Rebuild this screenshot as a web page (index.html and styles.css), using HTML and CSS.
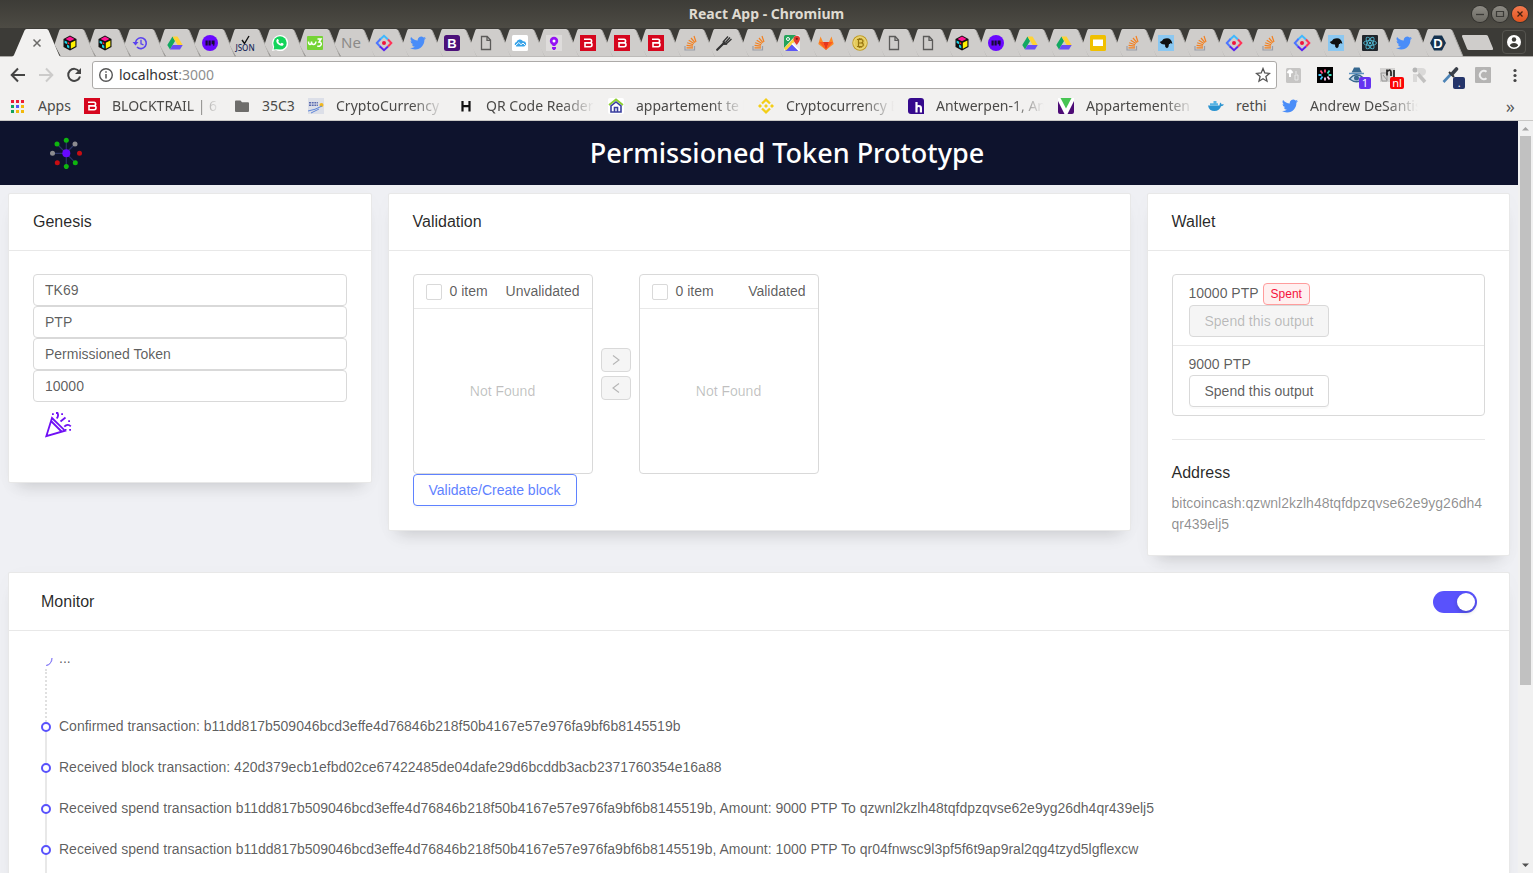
FILE: index.html
```html
<!DOCTYPE html>
<html lang="en">
<head>
<meta charset="utf-8">
<title>React App - Chromium</title>
<link rel="stylesheet" href="styles.css">
</head>
<body>
<svg class="sprite" aria-hidden="true">
  <symbol id="tab-shape" viewBox="0 0 50 29" overflow="visible">
    <path d="M15.500 1 H37 Q38.500 1 39.200 2.500 L50 28.500 H15.800 L9.500 16.500 L14.200 2.500 Q14.700 1 15.500 1Z" fill="#cfcdcb"/>
    <path d="M39.200 2.500 L50 28.500" stroke="#a9a7a4" fill="none"/>
  </symbol>
  <symbol id="i-cube" viewBox="0 0 16 16"><path d="M8 .5 14.500 4v8L8 15.500 1.500 12V4Z" fill="#111"/><path d="M8 1.500 12.500 4 8 6.300 3.500 4Z" fill="#ff1493"/><path d="M8.800 7.800 13.400 5.500v5.800L8.800 13.700Z" fill="#fff200"/><path d="M2.600 5.500 5.200 6.800v2.400L2.600 8Z" fill="#19d3e8"/><path d="M5 9.500 7.300 10.700v2.800L5 12.300Z" fill="#19d3e8"/><path d="M5.700 7l1.600.8v1.700l-1.600-.8Z" fill="#f22"/></symbol>
  <symbol id="i-clock" viewBox="0 0 16 16"><path d="M3.600 7A5.400 5.400 0 1 1 5 12" fill="none" stroke="#5a43ee" stroke-width="1.600"/><path d="M.5 7h6L3.500 10.500Z" fill="#5a43ee"/><path d="M9 4.800v4l2.500 1" fill="none" stroke="#5a43ee" stroke-width="1.300"/></symbol>
  <symbol id="i-drive" viewBox="0 0 16 16"><path d="M5.500 1.500 8 6 3 14.500.3 10Z" fill="#11a861"/><path d="M5.500 1.500h5L15.700 10h-5Z" fill="#ffd335"/><path d="M5.600 10h10.100L13 14.500H3Z" fill="#6a4df5"/></symbol>
  <symbol id="i-purple" viewBox="0 0 16 16"><circle cx="8" cy="8" r="8" fill="#6a08ff"/><path d="M3.500 5.500h2.200v5H3.500zM6.500 5.500h2.200v5H6.500zM9.600 5.500h3v3.700h-3z" fill="#160b35"/><circle cx="11.700" cy="9.900" r=".8" fill="#160b35"/></symbol>
  <symbol id="i-whatsapp" viewBox="0 0 16 16"><path d="M0 16 1.200 12A8 8 0 1 1 4 14.900Z" fill="#fff"/><circle cx="8" cy="7.900" r="6.700" fill="#13d45a"/><path d="M1.600 14.500 2.600 10l4 4Z" fill="#13d45a"/><path d="M5 4.300c.8-.6 1.300-.3 1.900 1.400-.7 1-.6 1.100.2 2 .8.900 1.300 1.200 1.700.9l1-.9c1.700.8 2 1 1.800 1.600-.5 1.800-2.400 1.900-4.400.7C4.700 8.500 3.500 6.200 5 4.300Z" fill="#fff"/></symbol>
  <symbol id="i-w3" viewBox="0 0 16 16"><rect y="1" width="16" height="14" rx="1" fill="#75d435"/><path d="M1.500 6.500c0 4 3 4 3 0 0 4 4 4 4.500 0M10.500 4h3.500l-2 3c4 0 2.500 5.500-1.700 4" fill="none" stroke="#fff" stroke-width="1.500"/></symbol>
  <symbol id="i-diamond" viewBox="0 0 16 16" overflow="visible"><path d="M4 4.500 8 .8l4 3.700" fill="none" stroke="#3fb8ff" stroke-width="2"/><path d="M4.500 4 .8 8l3.700 4" fill="none" stroke="#4d76ff" stroke-width="2"/><path d="M4 11.500 8 15.200l4-3.700" fill="none" stroke="#5b22f0" stroke-width="2"/><path d="M12 4.500 15.300 8 12 11.500" fill="none" stroke="#ff3158" stroke-width="2"/><circle cx="8" cy="8" r="2" fill="#f0143c"/></symbol>
  <symbol id="i-twitter" viewBox="0 0 24 24"><path fill="#4a8df8" d="M23.950 4.570a10 10 0 0 1-2.820.770 4.960 4.960 0 0 0 2.160-2.720 9.900 9.900 0 0 1-3.120 1.190 4.920 4.920 0 0 0-8.380 4.480A13.930 13.930 0 0 1 1.640 3.160a4.920 4.920 0 0 0 1.520 6.570 4.900 4.900 0 0 1-2.230-.61v.06a4.920 4.920 0 0 0 3.950 4.830 5 5 0 0 1-2.210.080 4.940 4.940 0 0 0 4.600 3.420A9.870 9.870 0 0 1 0 19.540a13.940 13.940 0 0 0 7.550 2.210c9.050 0 14-7.500 14-13.980 0-.210 0-.42-.020-.63a9.940 9.940 0 0 0 2.420-2.570Z"/></symbol>
  <symbol id="i-doc" viewBox="0 0 16 16"><path d="M3.500 1.500h5.700L12.500 5v9.500h-9ZM9 1.500V5.300h3.500" fill="none" stroke="#5c5b5a" stroke-width="1.300"/></symbol>
  <symbol id="i-cloud" viewBox="0 0 16 16"><rect width="16" height="16" rx="1.500" fill="#fff"/><path d="M4.500 11.500A2.300 2.300 0 0 1 4.500 7 3.600 3.600 0 0 1 11 6.200a2.700 2.700 0 0 1 1 5.300Z" fill="#38a3e8"/><path d="M3 11 6.800 7.500 9 9.700l2-1.700 2.500 2.500" fill="none" stroke="#fff"/></symbol>
  <symbol id="i-bulb" viewBox="0 0 16 16"><rect width="16" height="16" fill="#dedcdb"/><circle cx="8" cy="6" r="4.200" fill="#9412f5"/><circle cx="8" cy="6" r="1.500" fill="#fff"/><path d="M6 12h4v1.500L8.800 15H7.200L6 13.500ZM6.500 9.500h3v1.500h-3z" fill="#9412f5"/></symbol>
  <symbol id="i-red" viewBox="0 0 16 16"><rect width="16" height="16" fill="#d6061e"/><path d="M4 4.300h6q1.600 0 1.600 1.800T10 7.900H5v3.800h5.200q1.800 0 1.800-1.900T10 7.900" fill="none" stroke="#fff" stroke-width="1.600"/></symbol>
  <symbol id="i-stack" viewBox="0 0 16 16"><path d="M3 11v4h9.500v-4" fill="none" stroke="#9a9da8" stroke-width="1.200"/><path d="M4.500 12.800h6.500M4.600 10.300l6.400.8M5.200 7.800l6 1.900M6.700 5.200l5.300 3.200M9 3l4 4.700M12 1l2 6" stroke="#f4801f" stroke-width="1.200"/></symbol>
  <symbol id="i-fork" viewBox="0 0 16 16"><path d="M1.200 14.800 8.500 7.500" stroke="#333" stroke-width="2.200" stroke-linecap="round"/><path d="M7 7 12 1.500M9.500 7.500l4.500-5M9.500 9.500l6-5.500" stroke="#333" stroke-width="1.300" fill="none"/><path d="M7 6l4.500 3.500L8 10 6.500 9Z" fill="#333"/></symbol>
  <symbol id="i-maps" viewBox="0 0 16 16"><rect width="16" height="16" rx="1.500" fill="#e8e8e8"/><path d="M0 1.500Q0 0 1.500 0H12L0 13Z" fill="#24a45a"/><path d="M1 16 8 9l7 7Z" fill="#5c56f6"/><path d="M0 13.500 11 2l2 2L2 15.500Z" fill="#fbd33c"/><path d="M8 8.500 15.500 16" stroke="#fff" stroke-width="1.500"/><path d="M12.800 10Q9 5.500 9.500 3.500a3.300 3.300 0 0 1 6.500 0Q16 6 12.800 10Z" fill="#e23b30"/><circle cx="12.800" cy="3.800" r="1.100" fill="#7d1713"/><circle cx="4" cy="4" r="1.500" fill="none" stroke="#fff"/></symbol>
  <symbol id="i-gitlab" viewBox="0 0 16 16"><path d="M8 15 .3 9 2.500 1.500 5 7h6l2.500-5.500L15.700 9Z" fill="#fc8a26"/><path d="M8 15 5 7h6Z" fill="#e5361f"/><path d="M8 15 1 7h4ZM8 15l7-8h-4Z" fill="#fc5b22"/></symbol>
  <symbol id="i-btc" viewBox="0 0 16 16"><circle cx="8" cy="8" r="7.700" fill="#c19b1c"/><circle cx="8" cy="8" r="6.300" fill="#e5cb5a" stroke="#f8edae" stroke-width=".7"/><path d="M5 4.500h4q2 0 2 1.700T9 8H6.500M9 8q2.300 0 2.300 1.800T9 11.500H5M6.500 4.500v7M7.300 3v1.500M9 3v1.500M7.300 11.500V13M9 11.500V13" fill="none" stroke="#957310" stroke-width="1.200"/></symbol>
  <symbol id="i-slides" viewBox="0 0 16 16"><rect width="16" height="16" rx="1.500" fill="#f0c000"/><rect x="3" y="4.500" width="10" height="6.500" fill="#fff"/></symbol>
  <symbol id="i-horse" viewBox="0 0 16 16"><rect width="16" height="16" fill="#8ac7f1"/><path d="M1.700 7Q4 6.500 5.500 4 8 3 11 3.500 14 5 14.300 9L12.500 7.800Q12.500 9.500 11 9 11 12 9 13.200 6.500 12 7 9.500 3.500 9.800 1.700 7Z" fill="#101010"/></symbol>
  <symbol id="i-react" viewBox="0 0 16 16"><rect width="16" height="16" rx="1" fill="#20252b"/><g fill="none" stroke="#4fb3cc" stroke-width=".9"><ellipse cx="8" cy="8" rx="6.500" ry="2.500"/><ellipse cx="8" cy="8" rx="6.500" ry="2.500" transform="rotate(60 8 8)"/><ellipse cx="8" cy="8" rx="6.500" ry="2.500" transform="rotate(120 8 8)"/></g><circle cx="8" cy="8" r="1.200" fill="#4fb3cc"/></symbol>
</svg>

<header class="titlebar">
  <span class="titlebar-text">React App - Chromium</span>
  <div class="window-buttons">
    <button class="win" aria-label="Minimize"><svg viewBox="0 0 16 16"><path d="M4 8.500h8" stroke="#3b3a36" stroke-width="1.300"/></svg></button>
    <button class="win" aria-label="Maximize"><svg viewBox="0 0 16 16"><path d="M4.500 5.500h7v5h-7z" fill="none" stroke="#3b3a36" stroke-width="1.200"/></svg></button>
    <button class="win win-close" aria-label="Close"><svg viewBox="0 0 16 16"><path d="M5.500 5.500l5 5M10.500 5.500l-5 5" stroke="#46200f" stroke-width="1.300"/></svg></button>
  </div>
</header>

<nav class="tabstrip" aria-label="Tabs">
  <div class="tab tab-active"><button class="tab-hit" aria-label="Close tab"><svg viewBox="0 0 50 29"><path d="M0 29 Q1.500 28 2 27 L12.500 2.500 Q13 1 14.500 1 H34.500 Q36 1 36.600 2.500 L47 27 Q47.500 28.500 49 29Z" fill="#f2f1f0"/><path d="M21.500 11.500l7 7M28.500 11.500l-7 7" stroke="#6b6a68" stroke-width="1.500"/></svg></button></div>
  <ul class="tabs">
    <li class="tab"><button class="tab-hit" aria-label="Cube"><svg viewBox="0 0 50 29"><use href="#tab-shape"/><use href="#i-cube" x="17" y="7" width="16" height="16"/></svg></button></li>
    <li class="tab"><button class="tab-hit" aria-label="Cube"><svg viewBox="0 0 50 29"><use href="#tab-shape"/><use href="#i-cube" x="17" y="7" width="16" height="16"/></svg></button></li>
    <li class="tab"><button class="tab-hit" aria-label="History"><svg viewBox="0 0 50 29"><use href="#tab-shape"/><use href="#i-clock" x="17" y="7" width="16" height="16"/></svg></button></li>
    <li class="tab"><button class="tab-hit" aria-label="Drive"><svg viewBox="0 0 50 29"><use href="#tab-shape"/><use href="#i-drive" x="17" y="7" width="16" height="16"/></svg></button></li>
    <li class="tab"><button class="tab-hit" aria-label="Chat"><svg viewBox="0 0 50 29"><use href="#tab-shape"/><use href="#i-purple" x="17" y="7" width="16" height="16"/></svg></button></li>
    <li class="tab"><button class="tab-hit" aria-label="JSON"><svg viewBox="0 0 50 29"><use href="#tab-shape"/><path d="M22 12l2.500 3.500L29 8" fill="none" stroke="#111" stroke-width="1.400"/><text x="25" y="23" text-anchor="middle" class="g-json">JSON</text></svg></button></li>
    <li class="tab"><button class="tab-hit" aria-label="WhatsApp"><svg viewBox="0 0 50 29"><use href="#tab-shape"/><use href="#i-whatsapp" x="17" y="7" width="16" height="16"/></svg></button></li>
    <li class="tab"><button class="tab-hit" aria-label="W3"><svg viewBox="0 0 50 29"><use href="#tab-shape"/><use href="#i-w3" x="17" y="7" width="16" height="16"/></svg></button></li>
    <li class="tab"><button class="tab-hit" aria-label="New"><svg viewBox="0 0 50 29"><use href="#tab-shape"/><text x="16" y="20" class="g-ne">Ne</text></svg></button></li>
    <li class="tab"><button class="tab-hit" aria-label="Diamond"><svg viewBox="0 0 50 29"><use href="#tab-shape"/><use href="#i-diamond" x="17" y="7" width="16" height="16"/></svg></button></li>
    <li class="tab"><button class="tab-hit" aria-label="Twitter"><svg viewBox="0 0 50 29"><use href="#tab-shape"/><use href="#i-twitter" x="17" y="7" width="16" height="16"/></svg></button></li>
    <li class="tab"><button class="tab-hit" aria-label="Bootstrap"><svg viewBox="0 0 50 29"><use href="#tab-shape"/><rect x="17" y="7" width="16" height="16" rx="2.500" fill="#4b1079"/><text x="25" y="20" text-anchor="middle" class="g-boot">B</text></svg></button></li>
    <li class="tab"><button class="tab-hit" aria-label="Page"><svg viewBox="0 0 50 29"><use href="#tab-shape"/><use href="#i-doc" x="17" y="7" width="16" height="16"/></svg></button></li>
    <li class="tab"><button class="tab-hit" aria-label="Cloud"><svg viewBox="0 0 50 29"><use href="#tab-shape"/><use href="#i-cloud" x="17" y="7" width="16" height="16"/></svg></button></li>
    <li class="tab"><button class="tab-hit" aria-label="Bulb"><svg viewBox="0 0 50 29"><use href="#tab-shape"/><use href="#i-bulb" x="17" y="7" width="16" height="16"/></svg></button></li>
    <li class="tab"><button class="tab-hit" aria-label="Blocktrail"><svg viewBox="0 0 50 29"><use href="#tab-shape"/><use href="#i-red" x="17" y="7" width="16" height="16"/></svg></button></li>
    <li class="tab"><button class="tab-hit" aria-label="Blocktrail"><svg viewBox="0 0 50 29"><use href="#tab-shape"/><use href="#i-red" x="17" y="7" width="16" height="16"/></svg></button></li>
    <li class="tab"><button class="tab-hit" aria-label="Blocktrail"><svg viewBox="0 0 50 29"><use href="#tab-shape"/><use href="#i-red" x="17" y="7" width="16" height="16"/></svg></button></li>
    <li class="tab"><button class="tab-hit" aria-label="Stack Overflow"><svg viewBox="0 0 50 29"><use href="#tab-shape"/><use href="#i-stack" x="17" y="7" width="16" height="16"/></svg></button></li>
    <li class="tab"><button class="tab-hit" aria-label="Fork"><svg viewBox="0 0 50 29"><use href="#tab-shape"/><use href="#i-fork" x="17" y="7" width="16" height="16"/></svg></button></li>
    <li class="tab"><button class="tab-hit" aria-label="Stack Overflow"><svg viewBox="0 0 50 29"><use href="#tab-shape"/><use href="#i-stack" x="17" y="7" width="16" height="16"/></svg></button></li>
    <li class="tab"><button class="tab-hit" aria-label="Maps"><svg viewBox="0 0 50 29"><use href="#tab-shape"/><use href="#i-maps" x="17" y="7" width="16" height="16"/></svg></button></li>
    <li class="tab"><button class="tab-hit" aria-label="GitLab"><svg viewBox="0 0 50 29"><use href="#tab-shape"/><use href="#i-gitlab" x="17" y="7" width="16" height="16"/></svg></button></li>
    <li class="tab"><button class="tab-hit" aria-label="Bitcoin"><svg viewBox="0 0 50 29"><use href="#tab-shape"/><use href="#i-btc" x="17" y="7" width="16" height="16"/></svg></button></li>
    <li class="tab"><button class="tab-hit" aria-label="Page"><svg viewBox="0 0 50 29"><use href="#tab-shape"/><use href="#i-doc" x="17" y="7" width="16" height="16"/></svg></button></li>
    <li class="tab"><button class="tab-hit" aria-label="Page"><svg viewBox="0 0 50 29"><use href="#tab-shape"/><use href="#i-doc" x="17" y="7" width="16" height="16"/></svg></button></li>
    <li class="tab"><button class="tab-hit" aria-label="Cube"><svg viewBox="0 0 50 29"><use href="#tab-shape"/><use href="#i-cube" x="17" y="7" width="16" height="16"/></svg></button></li>
    <li class="tab"><button class="tab-hit" aria-label="Chat"><svg viewBox="0 0 50 29"><use href="#tab-shape"/><use href="#i-purple" x="17" y="7" width="16" height="16"/></svg></button></li>
    <li class="tab"><button class="tab-hit" aria-label="Drive"><svg viewBox="0 0 50 29"><use href="#tab-shape"/><use href="#i-drive" x="17" y="7" width="16" height="16"/></svg></button></li>
    <li class="tab"><button class="tab-hit" aria-label="Drive"><svg viewBox="0 0 50 29"><use href="#tab-shape"/><use href="#i-drive" x="17" y="7" width="16" height="16"/></svg></button></li>
    <li class="tab"><button class="tab-hit" aria-label="Slides"><svg viewBox="0 0 50 29"><use href="#tab-shape"/><use href="#i-slides" x="17" y="7" width="16" height="16"/></svg></button></li>
    <li class="tab"><button class="tab-hit" aria-label="Stack Overflow"><svg viewBox="0 0 50 29"><use href="#tab-shape"/><use href="#i-stack" x="17" y="7" width="16" height="16"/></svg></button></li>
    <li class="tab"><button class="tab-hit" aria-label="Horse"><svg viewBox="0 0 50 29"><use href="#tab-shape"/><use href="#i-horse" x="17" y="7" width="16" height="16"/></svg></button></li>
    <li class="tab"><button class="tab-hit" aria-label="Stack Overflow"><svg viewBox="0 0 50 29"><use href="#tab-shape"/><use href="#i-stack" x="17" y="7" width="16" height="16"/></svg></button></li>
    <li class="tab"><button class="tab-hit" aria-label="Diamond"><svg viewBox="0 0 50 29"><use href="#tab-shape"/><use href="#i-diamond" x="17" y="7" width="16" height="16"/></svg></button></li>
    <li class="tab"><button class="tab-hit" aria-label="Stack Overflow"><svg viewBox="0 0 50 29"><use href="#tab-shape"/><use href="#i-stack" x="17" y="7" width="16" height="16"/></svg></button></li>
    <li class="tab"><button class="tab-hit" aria-label="Diamond"><svg viewBox="0 0 50 29"><use href="#tab-shape"/><use href="#i-diamond" x="17" y="7" width="16" height="16"/></svg></button></li>
    <li class="tab"><button class="tab-hit" aria-label="Horse"><svg viewBox="0 0 50 29"><use href="#tab-shape"/><use href="#i-horse" x="17" y="7" width="16" height="16"/></svg></button></li>
    <li class="tab"><button class="tab-hit" aria-label="React"><svg viewBox="0 0 50 29"><use href="#tab-shape"/><use href="#i-react" x="17" y="7" width="16" height="16"/></svg></button></li>
    <li class="tab"><button class="tab-hit" aria-label="Twitter"><svg viewBox="0 0 50 29"><use href="#tab-shape"/><use href="#i-twitter" x="17" y="7" width="16" height="16"/></svg></button></li>
    <li class="tab"><button class="tab-hit" aria-label="D"><svg viewBox="0 0 50 29"><use href="#tab-shape"/><path d="M21 7.500h8L33 15l-4 7.500h-8L17 15Z" fill="#14324f"/><text x="25" y="20" text-anchor="middle" class="g-boot">D</text></svg></button></li>
  </ul>
  <div class="tab-tools">
    <button class="new-tab" aria-label="New tab"><svg width="34" height="17" viewBox="0 0 34 17"><path d="M2 1h23q1.500 0 2 1.200l5 12q.6 1.800-.8 1.800H8q-1.500 0-2-1.200L1 2.500Q.5 1 2 1Z" fill="#cfcdcb"/></svg></button>
    <button class="avatar" aria-label="Profile"><svg width="16" height="16" viewBox="0 0 16 16"><circle cx="8" cy="8" r="7" fill="#fff"/><circle cx="8" cy="5.500" r="2.200" fill="#3c3b37"/><path d="M3.800 11.500Q4.500 9 8 9t4.200 2.500Q10.500 13.500 8 13.500t-4.200-2Z" fill="#3c3b37"/></svg></button>
  </div>
</nav>

<div class="toolbar">
  <div class="nav-buttons">
    <button class="tool" aria-label="Back"><svg viewBox="0 0 16 16"><path d="M15 8H2M8 1.500 1.700 8 8 14.500" fill="none" stroke="#444" stroke-width="2"/></svg></button>
    <button class="tool" aria-label="Forward" disabled><svg viewBox="0 0 16 16"><path d="M1 8h13M8 1.500 14.300 8 8 14.500" fill="none" stroke="#cccbca" stroke-width="2"/></svg></button>
    <button class="tool" aria-label="Reload"><svg viewBox="0 0 16 16"><path d="M13.200 4.500A6 6 0 1 0 14 9.500" fill="none" stroke="#444" stroke-width="2"/><path d="M15 1v6H9Z" fill="#444"/></svg></button>
  </div>
  <div class="omnibox">
    <svg class="ico" viewBox="0 0 16 16"><circle cx="8" cy="8" r="6.300" fill="none" stroke="#555" stroke-width="1.400"/><path d="M8 7v4.500M8 4.300v1.500" stroke="#555" stroke-width="1.500"/></svg>
    <div class="url" role="textbox" aria-label="Address" tabindex="0">localhost<span class="port">:3000</span></div>
    <button class="tool star" aria-label="Bookmark"><svg viewBox="0 0 16 16"><path d="M8 1.500 9.800 6l4.700.4-3.600 3.100 1.100 4.700L8 11.700l-4 2.500 1.100-4.700L1.500 6.400 6.200 6Z" fill="none" stroke="#555" stroke-width="1.300"/></svg></button>
  </div>
  <div class="extensions">
    <button class="ext" aria-label="Translate"><svg viewBox="0 0 20 20"><rect x="1" y="1" width="15" height="15" rx="1.500" fill="#c6c5c4"/><path d="M5 3v7M5 3 2.500 6M5 3l2.500 3" stroke="#fff" stroke-width="2"/><path d="M11 4v3M10 8h3v5h-3z" stroke="#e8e8e8" fill="none"/></svg></button>
    <button class="ext" aria-label="Burst"><svg viewBox="0 0 20 20"><rect x="1" y="0" width="16" height="16" fill="#000"/><g stroke-width="1.800"><path d="M9 2.500v3M4.500 3.500l2 3" stroke="#ff4c7c"/><path d="M13.500 3.500l-2 3M12.500 8h3" stroke="#3fe0c0"/><path d="M2.500 8h3M4.500 12.500l2-3" stroke="#45c8ff"/><path d="M9 10.500v3M13.500 12.500l-2-3" stroke="#ffc6ee"/></g></svg></button>
    <button class="ext" aria-label="Privacy"><svg viewBox="0 0 20 20"><path d="M3.500 5.500Q5 3 6 .5h5.500Q12.500 3.500 14 5.500Z" fill="#36688f"/><path d="M1 6.500h15" stroke="#5d93c0" stroke-width="1.500"/><path d="M1.500 12Q8 4 15.500 11q-6 7-14 1Z" fill="#c9dcec" stroke="#36688f" stroke-width="1.300"/><circle cx="8.500" cy="11" r="2.500" fill="#36688f"/></svg><span class="badge badge-violet">1</span></button>
    <button class="ext" aria-label="Language"><svg viewBox="0 0 20 20"><rect x="1" y="1" width="15" height="14" fill="#d5d4d3"/><path d="M2 6h6v8H3ZM4 8l4 5" fill="none" stroke="#999"/><path d="M8 2.500v6M8 4.500q3.500-3 4 .5v4M15 3v7" fill="none" stroke="#222" stroke-width="1.700"/></svg><span class="badge badge-red">nl</span></button>
    <button class="ext" aria-label="Reader"><svg viewBox="0 0 20 20"><circle cx="4" cy="3" r="2.500" fill="#b5b5b5"/><path d="M2 7h4v8H2zM6 1h5q4 0 4 3.500T11 9L7 6Z" fill="#dad9d8"/><path d="M7 7l7 8" stroke="#c2c1c0" stroke-width="3.500"/></svg></button>
    <button class="ext" aria-label="Color picker"><svg viewBox="0 0 20 20"><path d="M1.500 15 9 7" stroke="#4d84b6" stroke-width="2.600"/><path d="M7 5l5 5" stroke="#333" stroke-width="2"/><path d="M10 7l4.500-5" stroke="#3a3f48" stroke-width="3.600" stroke-linecap="round"/></svg><span class="badge badge-navy">.</span></button>
    <button class="ext" aria-label="C extension"><svg viewBox="0 0 20 20"><rect x="1" y="0" width="16" height="16" rx="1" fill="#b5b4b3"/><path d="M12.500 4.700A4 4.300 0 1 0 12.500 11.300" fill="none" stroke="#eee" stroke-width="2"/></svg></button>
    <button class="ext" aria-label="Menu"><svg viewBox="0 0 20 20"><circle cx="10" cy="3.500" r="1.600" fill="#444"/><circle cx="10" cy="8.500" r="1.600" fill="#444"/><circle cx="10" cy="13.500" r="1.600" fill="#444"/></svg></button>
  </div>
</div>

<nav class="bookmarks" aria-label="Bookmarks">
  <a class="bm" href="#"><svg class="ico" viewBox="0 0 16 16"><path d="M1 2h3v3H1zM6 2h3v3H6zM11 2h3v3h-3z" fill="#ee1c35"/><path d="M1 7h3v3H1z" fill="#12a45c"/><path d="M6 7h3v3H6z" fill="#4f57f5"/><path d="M11 7h3v3h-3z" fill="#f2b90c"/><path d="M1 12h3v3H1z" fill="#12a45c"/><path d="M6 12h3v3H6zM11 12h3v3h-3z" fill="#f2b90c"/></svg><span class="bm-text">Apps</span></a>
  <a class="bm" href="#"><svg class="ico"><use href="#i-red"/></svg><span class="bm-text fade">BLOCKTRAIL | 61.2</span></a>
  <a class="bm" href="#"><svg class="ico" viewBox="0 0 16 16"><path d="M1 3.500Q1 2.500 2 2.500h4.500L8 4.200h6q1 0 1 1V13q0 1-1 1H2q-1 0-1-1Z" fill="#6e6d6b"/></svg><span class="bm-text">35C3</span></a>
  <a class="bm" href="#"><svg class="ico" viewBox="0 0 16 16"><rect width="16" height="16" fill="#dcdfe8"/><path d="M1 4.500h9M1 6h9M1 7.500h9" stroke="#5b6bb0" stroke-dasharray="2 .7"/><circle cx="13.500" cy="7" r="2" fill="#f2b81c"/><path d="M0 13q7-1 14-5M3 15l8-4" stroke="#5f86d8" fill="none"/></svg><span class="bm-text fade">CryptoCurrency M</span></a>
  <a class="bm" href="#"><svg class="ico" viewBox="0 0 16 16"><path d="M4.500 3v10.500M11.500 3v10.500M4.500 8.200h7" stroke="#111" stroke-width="2.200"/></svg><span class="bm-text fade">QR Code Reader |</span></a>
  <a class="bm" href="#"><svg class="ico" viewBox="0 0 16 16"><rect width="16" height="16" rx="2" fill="#fff"/><path d="M1 7 8 1.500 15 7" fill="none" stroke="#8ccf2f" stroke-width="1.800"/><path d="M3 14V8l5-4 5 4v6ZM6.500 14V9.500h3V14" fill="none" stroke="#3a3f9f" stroke-width="1.600"/></svg><span class="bm-text fade">appartement te hu</span></a>
  <a class="bm" href="#"><svg class="ico" viewBox="0 0 16 16"><path d="M4 5.500 8 1.700l4 3.800M4 10.500l4 3.800 4-3.800" fill="none" stroke="#f3ce16" stroke-width="2.300"/><path d="M8 6l2 2-2 2-2-2ZM2 6l2 2-2 2-2-2ZM14 6l2 2-2 2-2-2Z" fill="#f3ce16"/></svg><span class="bm-text fade">Cryptocurrency Ex</span></a>
  <a class="bm" href="#"><svg class="ico" viewBox="0 0 16 16"><path d="M3 0h10q3 0 3 3v13H3q-3 0-3-3V3q0-3 3-3Z" fill="#360a8d"/><path d="M8.500 4v10.500M8.500 10q0-2 2.200-2t2.200 2v4.500" fill="none" stroke="#fff" stroke-width="2.200"/></svg><span class="bm-text fade">Antwerpen-1, Ant</span></a>
  <a class="bm" href="#"><svg class="ico" viewBox="0 0 16 16"><path d="M0 2v12q0 2 2 2h12q2 0 2-2V2Z" fill="#4d0b76"/><path d="M0 0h16v3L9.500 16h-3L0 3Z" fill="#fff"/><path d="M2.500 0h11L8 10.500Z" fill="#47c553"/></svg><span class="bm-text fade">Appartementen t</span></a>
  <a class="bm" href="#"><svg class="ico" viewBox="0 0 16 16"><path d="M0 7.500h11.500q0-2 1-3 1 1 1 2 1-.5 2.500 0-1 1.800-3 1.800Q11.500 13 6.500 13 1 13 0 7.500Z" fill="#2a93d0"/><path d="M2 5.300h8v2.200H2zM5.500 3h3v2.300h-3z" fill="#58b4e4"/></svg><span class="bm-text">rethi</span></a>
  <a class="bm" href="#"><svg class="ico"><use href="#i-twitter"/></svg><span class="bm-text fade">Andrew DeSantis</span></a>
  <button class="bm-more" aria-label="More bookmarks">»</button>
</nav>

<div class="viewport">
  <main class="app">
    <header class="app-header">
      <svg class="logo" viewBox="0 0 32 32"><path d="M16.300 3v26.700M7 7l18.300 18.700M25 7l-9 9M2.300 16.300h14" stroke="#2b3566" stroke-width="1.200"/><g fill="#0eb50e"><circle cx="16.300" cy="3.200" r="2.500"/><circle cx="7" cy="7" r="2.500"/><circle cx="25.300" cy="25.700" r="2.500"/><circle cx="16.300" cy="29.600" r="2.500"/></g><g fill="#8c8c90"><circle cx="25" cy="7" r="2.500"/><circle cx="2.500" cy="16.300" r="2.500"/></g><g fill="#c60d12"><circle cx="29.500" cy="16.300" r="2.500"/><circle cx="7.300" cy="25.700" r="2.500"/></g><circle cx="16.300" cy="16.300" r="4" fill="#6808ff"/></svg>
      <h1 class="app-title">Permissioned Token Prototype</h1>
    </header>

    <div class="row">
      <section class="card">
        <h2 class="card-head">Genesis</h2>
        <div class="card-body">
          <input class="field" aria-label="Token id" value="TK69">
          <input class="field" aria-label="Symbol" value="PTP">
          <input class="field" aria-label="Name" value="Permissioned Token">
          <input class="field" aria-label="Supply" value="10000">
          <button class="party" aria-label="Create genesis"><svg width="27" height="26" viewBox="0 0 27 26"><g fill="none" stroke="#7010f5" stroke-width="1.800"><path d="M1.300 24.200 7 6l13 12.700ZM6.500 9.500 16.500 19.500M11 1h1.500q1.500 3-.8 5.500M15.500 9.500l5-4M19.300 14.700q3.500-3.500 6.500-.4"/></g><path d="M7 1.200h1.800V3H7zM16.200 1.200H18V3h-1.800zM23.200 8.200H25V10h-1.800zM24.200 17H26v1.800h-1.800zM20 17h1.500v1.500H20z" fill="#7010f5"/></svg></button>
        </div>
      </section>

      <section class="card">
        <h2 class="card-head">Validation</h2>
        <div class="card-body">
          <div class="transfer">
            <div class="box">
              <div class="box-head"><label class="check"><input type="checkbox"><span>0 item</span></label><span>Unvalidated</span></div>
              <div class="box-body">Not Found</div>
            </div>
            <div class="ops">
              <button class="op" aria-label="Move right" disabled><svg viewBox="0 0 12 12"><path d="M3 1.500 9 6l-6 4.500" fill="none" stroke="#b5b5b5" stroke-width="1.100"/></svg></button>
              <button class="op" aria-label="Move left" disabled><svg viewBox="0 0 12 12"><path d="M9 1.500 3 6l6 4.500" fill="none" stroke="#b5b5b5" stroke-width="1.100"/></svg></button>
            </div>
            <div class="box">
              <div class="box-head"><label class="check"><input type="checkbox"><span>0 item</span></label><span>Validated</span></div>
              <div class="box-body">Not Found</div>
            </div>
          </div>
          <button class="btn btn-ghost">Validate/Create block</button>
        </div>
      </section>

      <section class="card">
        <h2 class="card-head">Wallet</h2>
        <div class="card-body wallet-body">
          <ul class="outputs">
            <li class="output"><div class="amount">10000 PTP <span class="tag">Spent</span></div><button class="btn" disabled>Spend this output</button></li>
            <li class="output"><div class="amount">9000 PTP</div><button class="btn">Spend this output</button></li>
          </ul>
          <hr class="divider">
          <h3 class="sub-title">Address</h3>
          <p class="address">bitcoincash:qzwnl2kzlh48tqfdpzqvse62e9yg26dh4qr439elj5</p>
        </div>
      </section>
    </div>

    <section class="card monitor">
      <div class="card-head monitor-head">
        <h2 class="monitor-title">Monitor</h2>
        <input class="switch" type="checkbox" role="switch" aria-label="Monitor" checked>
      </div>
      <ol class="timeline">
        <li class="event pending"><span class="rail"><svg class="spin" viewBox="0 0 12 12"><path d="M11 2Q11.500 7.500 5 9.500 9.500 10 11 2Z" fill="#8a80f5" stroke="#8a80f5" stroke-width=".8"/></svg><span class="dots"></span></span><span>...</span></li>
        <li class="event first"><span class="rail line"><span class="dot"></span></span><span>Confirmed transaction: b11dd817b509046bcd3effe4d76846b218f50b4167e57e976fa9bf6b8145519b</span></li>
        <li class="event"><span class="rail line"><span class="dot"></span></span><span>Received block transaction: 420d379ecb1efbd02ce67422485de04dafe29d6bcddb3acb2371760354e16a88</span></li>
        <li class="event"><span class="rail line"><span class="dot"></span></span><span>Received spend transaction b11dd817b509046bcd3effe4d76846b218f50b4167e57e976fa9bf6b8145519b, Amount: 9000 PTP To qzwnl2kzlh48tqfdpzqvse62e9yg26dh4qr439elj5</span></li>
        <li class="event"><span class="rail line"><span class="dot"></span></span><span>Received spend transaction b11dd817b509046bcd3effe4d76846b218f50b4167e57e976fa9bf6b8145519b, Amount: 1000 PTP To qr04fnwsc9l3pf5f6t9ap9ral2qg4tzyd5lgflexcw</span></li>
      </ol>
    </section>
  </main>
  <div class="scrollbar" aria-hidden="true">
    <svg width="15" height="15" viewBox="0 0 15 15"><path d="M4 9.500h7L7.500 6Z" fill="#a3a3a3"/></svg>
    <div class="track"><div class="thumb"></div></div>
    <svg width="15" height="15" viewBox="0 0 15 15"><path d="M4 5.500h7L7.500 9Z" fill="#505050"/></svg>
  </div>
</div>
</body>
</html>
```
FILE: styles.css
```css
* { box-sizing: border-box; }
body {
  margin: 0;
  height: 100vh;
  display: flex;
  flex-direction: column;
  overflow: hidden;
  background: #f2f1f0;
  font: 14px/21px "Liberation Sans", Arial, sans-serif;
  color: rgba(0, 0, 0, .65);
}
button { font: inherit; color: inherit; margin: 0; padding: 0; border: 0; background: none; }
input { font: inherit; color: inherit; margin: 0; }
h1, h2, h3, p, ul, ol { margin: 0; padding: 0; list-style: none; font-weight: 400; }
svg { display: block; flex: none; }
.sprite { position: absolute; width: 0; height: 0; }
.ico { width: 16px; height: 16px; }
.g-json { font: 500 8px "Noto Sans", sans-serif; fill: #1b2a5c; }
.g-ne { font: 15px "Noto Sans", sans-serif; fill: #8b8a88; }
.g-boot { font: bold 13px "Liberation Sans", sans-serif; fill: #fff; }

/* Window frame */
.titlebar {
  flex: none;
  display: grid;
  grid-template-columns: 1fr auto 1fr;
  align-items: center;
  height: 28px;
  background: linear-gradient(#3d3c37, #4d4b44);
}
.titlebar-text { grid-column: 2; font: bold 14px/20px "Noto Sans", sans-serif; color: #dfdbd2; }
.window-buttons { display: flex; justify-content: flex-end; gap: 4px; padding-right: 5px; }
.win { width: 16px; height: 16px; border-radius: 50%; background: linear-gradient(#8d8b84, #6b6962); box-shadow: 0 0 0 1px #33322e; }
.win-close { background: linear-gradient(#f47a4f, #e2541f); }

.tabstrip { flex: none; display: flex; height: 29px; padding-left: 12px; background: #3c3b37; border-bottom: 1px solid #a9a7a4; }
.tabs { flex: 1; display: flex; min-width: 0; }
.tab { flex: 1 1 0; min-width: 0; display: flex; justify-content: center; }
.tabs .tab:nth-child(-n+9) { flex: 0 1 35px; }
.tab-hit { flex: none; width: 50px; height: 29px; }
.tab-hit svg { width: 50px; height: 29px; overflow: visible; }
.tab-active { flex: none; width: 40px; justify-content: flex-start; position: relative; z-index: 1; }
.tab-tools { flex: none; display: flex; align-items: center; gap: 7px; width: 78px; padding-left: 6px; }
.avatar { display: grid; place-items: center; width: 24px; height: 24px; border: 1px solid #55544f; border-radius: 4px; }

.toolbar { flex: none; display: flex; align-items: center; height: 35px; padding: 0 8px 0 10px; gap: 8px; }
.nav-buttons { display: flex; gap: 12px; padding-right: 2px; }
.tool, .tool svg { width: 16px; height: 16px; }
.omnibox { flex: 1; display: flex; align-items: center; gap: 5px; height: 28px; padding: 0 5px; background: #fff; border: 1px solid #acaaa8; border-radius: 3px; }
.url { flex: 1; font: 14px/20px "Noto Sans", sans-serif; color: #333; }
.port { color: #8f8f8f; }
.extensions { display: flex; width: 240px; justify-content: space-between; }
.ext { position: relative; width: 20px; height: 16px; }
.ext svg { width: 20px; height: 20px; }
.badge { position: absolute; left: 11px; top: 10px; min-width: 12px; height: 12px; border-radius: 2px; padding: 0 2px; font: 11px/12px "Noto Sans", sans-serif; color: #fff; }
.badge-violet { background: #6633f0; }
.badge-red { background: #fb0505; }
.badge-navy { background: #25356a; }

.bookmarks { flex: none; display: flex; align-items: center; gap: 12px; height: 29px; padding: 0 18px 0 10px; border-bottom: 1px solid #c9c8c6; }
.bm { flex: none; display: flex; align-items: center; gap: 12px; color: #4b4a48; text-decoration: none; }
.bm-text { min-width: 34px; max-width: 110px; overflow: hidden; white-space: nowrap; font: 14px/20px "Noto Sans", sans-serif; }
.fade { mask-image: linear-gradient(to right, #000 76px, transparent 108px); }
.bm-more { margin-left: auto; font: 18px/20px "Noto Sans", sans-serif; }

/* Page */
.viewport { flex: 1; min-height: 0; display: flex; background: #eff0f4; }
.app { flex: 1; min-width: 0; display: flex; flex-direction: column; overflow: hidden; }
.app-header { flex: none; display: flex; align-items: center; gap: 24px; height: 64px; padding: 0 50px; background: #0e132d; }
.logo { width: 32px; height: 32px; }
.app-title { flex: 1; text-align: center; font: 500 27px/40px "Noto Sans", sans-serif; color: #fff; }

.row { flex: none; display: grid; grid-template-columns: 1fr 2fr 1fr; align-items: start; }
.card {
  margin: 8px;
  background: #fff;
  border: 1px solid #e8e8e8;
  border-radius: 2px;
  box-shadow: 0 12px 16px -10px rgba(0, 0, 0, .17), 0 4px 24px rgba(0, 0, 0, .02);
}
.card-head { height: 57px; padding: 16px 24px; margin-bottom: -1px; border-bottom: 1px solid #e8e8e8; font-size: 16px; line-height: 24px; color: rgba(0, 0, 0, .85); }
.card-body { padding: 24px; }
.field { display: block; width: 100%; height: 32px; padding: 4px 11px; border: 1px solid #d9d9d9; border-radius: 4px; background: #fff; }
.party { display: block; height: 56px; padding: 10px 12px 20px; }

.transfer { display: flex; align-items: center; gap: 8px; }
.box { display: flex; flex-direction: column; width: 180px; height: 200px; border: 1px solid #d9d9d9; border-radius: 4px; }
.box-head { display: flex; justify-content: space-between; align-items: center; height: 34px; padding: 0 12px; border-bottom: 1px solid #e8e8e8; }
.check { display: flex; align-items: center; gap: 8px; }
.check input { appearance: none; width: 16px; height: 16px; border: 1px solid #d9d9d9; border-radius: 2px; background: #fff; }
.box-body { flex: 1; display: grid; place-items: center; color: rgba(0, 0, 0, .25); }
.ops { display: flex; flex-direction: column; gap: 4px; }
.op { display: grid; place-items: center; width: 30px; height: 24px; border: 1px solid #d9d9d9; border-radius: 4px; background: #f5f5f5; }
.op svg { width: 12px; height: 12px; }

.btn { height: 32px; padding: 0 15px; border: 1px solid #d9d9d9; border-radius: 4px; background: #fff; box-shadow: 0 2px 0 rgba(0, 0, 0, .02); }
.btn:disabled { background: #f5f5f5; color: rgba(0, 0, 0, .25); box-shadow: none; }
.btn-ghost { display: block; border-color: #5f82ff; color: #5f82ff; }

.wallet-body { padding-bottom: 20px; }
.outputs { border: 1px solid #d9d9d9; border-radius: 4px; }
.output { padding: 8px 16px; }
.output + .output { border-top: 1px solid #e8e8e8; }
.output .btn { display: block; }
.amount { display: flex; align-items: flex-start; gap: 4px; }
.tag { height: 22px; padding: 0 7px; border: 1px solid #ff9c9c; border-radius: 4px; background: #fff0f0; color: #f5123c; font-size: 12px; line-height: 20px; }
.divider { margin: 23px 0 21px; border: 0; border-top: 1px solid #e8e8e8; }
.sub-title { margin-bottom: 8px; font-size: 16px; line-height: 24px; color: rgba(0, 0, 0, .85); }
.address { color: rgba(0, 0, 0, .45); overflow-wrap: anywhere; }

.monitor { flex: 1 0 auto; display: flex; flex-direction: column; border-bottom: 0; margin-bottom: 0; }
.monitor-head { display: flex; justify-content: space-between; align-items: center; height: 58px; padding: 0 32px; margin: 0; }
.monitor-title { font-size: 16px; }
.switch { appearance: none; display: flex; justify-content: flex-end; width: 44px; height: 22px; padding: 2px; border-radius: 11px; background: #5952fc; }
.switch::before { content: ""; width: 18px; height: 18px; border-radius: 50%; background: #fff; box-shadow: 0 2px 4px rgba(0, 35, 11, .2); }
.timeline { flex: 1; display: flex; flex-direction: column; padding: 17px 32px 0; }
.event { display: flex; gap: 8px; min-height: 41px; white-space: nowrap; }
.event:last-child { flex: 1; }
.pending { min-height: 68px; }
.rail { flex: none; display: flex; flex-direction: column; width: 10px; }
.line { background: linear-gradient(#e8e8e8, #e8e8e8) center top / 2px 100% no-repeat; padding-top: 6px; }
.first .line { background-position: center 6px; }
.dot { width: 10px; height: 10px; border: 2px solid #5952fc; border-radius: 50%; background: #fff; }
.spin { width: 12px; height: 12px; margin: 8px 0 1px; }
.dots { flex: 1; width: 2px; margin: 0 4px -6px; border-left: 2px dotted #e0e0e0; }

.scrollbar { flex: none; display: flex; flex-direction: column; width: 15px; background: #f1f1f1; }
.track { flex: 1; padding: 0 2px; }
.thumb { height: 76%; background: #c1c1c1; }
```
